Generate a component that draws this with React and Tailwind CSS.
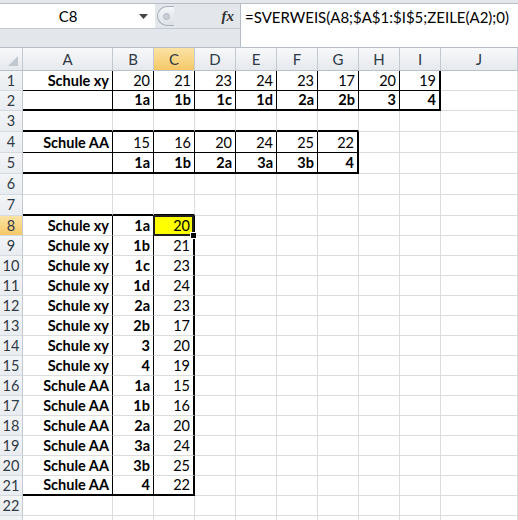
import React from "react";

const COLS = ["A", "B", "C", "D", "E", "F", "G", "H", "I", "J"];
const WIDTHS = [
  "w-[90px]",
  "w-[41px]",
  "w-[41px]",
  "w-[41px]",
  "w-[41px]",
  "w-[41px]",
  "w-[41px]",
  "w-[41px]",
  "w-[41px]",
  "flex-1",
];

// row heights (incl. bottom line)
const ROW_H = {
  1: "h-[20px]",
  2: "h-[20px]",
  3: "h-[21px]",
  4: "h-[21px]",
  5: "h-[21px]",
  6: "h-[21px]",
  7: "h-[21px]",
};

const ROWS = Array.from({ length: 23 }, (_, i) => i + 1);

// cell contents
const cells = {};
const put = (row, startCol, values, bold) => {
  values.forEach((v, i) => {
    cells[`${COLS[startCol + i]}${row}`] = { v, b: bold };
  });
};
put(1, 0, ["Schule xy"], true);
put(1, 1, ["20", "21", "23", "24", "23", "17", "20", "19"], false);
put(2, 1, ["1a", "1b", "1c", "1d", "2a", "2b", "3", "4"], true);
put(4, 0, ["Schule AA"], true);
put(4, 1, ["15", "16", "20", "24", "25", "22"], false);
put(5, 1, ["1a", "1b", "2a", "3a", "3b", "4"], true);

const listB = ["1a", "1b", "1c", "1d", "2a", "2b", "3", "4", "1a", "1b", "2a", "3a", "3b", "4"];
const listC = ["20", "21", "23", "24", "23", "17", "20", "19", "15", "16", "20", "24", "25", "22"];
listB.forEach((b, i) => {
  const r = 8 + i;
  put(r, 0, [i < 8 ? "Schule xy" : "Schule AA"], true);
  put(r, 1, [b], true);
  put(r, 2, [listC[i]], false);
});

const THIN_R = "border-r border-r-black";
const THICK_R = "border-r-2 border-r-black";
const GRID_R = "border-r border-r-[#dadcdd]";
const THIN_B = "border-b border-b-black";
const THICK_B = "border-b-2 border-b-black";
const GRID_B = "border-b border-b-[#dadcdd]";

const rightBorder = (r, c) => {
  if (r <= 2) {
    if (c <= 7) return THIN_R;
    if (c === 8) return THICK_R;
  }
  if (r === 4 || r === 5) {
    if (c <= 5) return THIN_R;
    if (c === 6) return THICK_R;
  }
  if (r >= 8 && r <= 21) {
    if (c <= 1) return THIN_R;
    if (c === 2) return THICK_R;
  }
  return GRID_R;
};

const bottomBorder = (r, c) => {
  if (r === 1 && c <= 8) return THIN_B;
  if (r === 2 && c <= 8) return THICK_B;
  if (r === 3 && c <= 6) return THICK_B;
  if (r === 4 && c <= 6) return THIN_B;
  if (r === 5 && c <= 6) return THICK_B;
  if (r === 7 && c <= 2) return THICK_B;
  if (r === 21 && c <= 2) return THICK_B;
  return GRID_B;
};

const Cell = ({ r, c }) => {
  const key = `${COLS[c]}${r}`;
  const cell = cells[key];
  const active = key === "C8";
  return (
    <div
      className={`${WIDTHS[c]} shrink-0 h-full flex items-end justify-end px-[3px] relative ${rightBorder(r, c)} ${bottomBorder(r, c)} ${
        active ? "bg-[#ffff00]" : "bg-white"
      }`}
    >
      {cell && (
        <span className={`leading-[18px] whitespace-nowrap ${cell.b ? "font-bold" : ""}`}>
          {cell.v}
        </span>
      )}
      {active && (
        <>
          <div className="absolute -left-[1px] -top-[1px] -right-[1px] -bottom-[1px] border-2 border-[#202020] pointer-events-none z-10" />
          <div className="absolute -right-[4px] -bottom-[4px] w-[7px] h-[7px] bg-black border border-white z-20" />
        </>
      )}
    </div>
  );
};

export default function App() {
  return (
    <div
      className="w-[518px] h-[520px] overflow-hidden bg-white text-black text-[14.5px]"
      style={{ fontFamily: "Lato, 'Open Sans', sans-serif" }}
    >
      {/* top strip */}
      <div className="h-[4px] bg-[#e4e8ed] border-b border-[#b6bdc6]" />

      {/* formula bar */}
      <div className="flex h-[44px] border-b border-[#b6bdc6]">
        <div className="w-[241px] shrink-0 flex flex-col bg-[#e3e7ec] border-r border-[#b6bdc6]">
          <div className="h-[25px] flex items-center border-b border-[#c3c9d1]">
            <div className="w-[155px] h-full bg-white flex items-center">
              <span className="w-[136px] text-center leading-[18px] text-[15px]">C8</span>
              <svg width="9" height="5" viewBox="0 0 9 5" className="ml-[3px]">
                <polygon points="0,0 9,0 4.5,5" fill="#444" />
              </svg>
            </div>
            <div className="ml-[2px] w-[17px] h-[20px] rounded-l-full border border-r-0 border-[#a7afb9] bg-linear-to-b from-[#f4f6f8] to-[#dde2e8] flex items-center justify-center">
              <div className="w-[7px] h-[7px] rounded-full bg-[#c9ced5] border border-[#b3b9c1]" />
            </div>
            <div className="flex-1" />
            <span
              className="mr-[6px] italic font-bold text-[15px] leading-none text-[#333]"
              style={{ fontFamily: "'Liberation Serif', serif" }}
            >
              fx
            </span>
          </div>
          <div className="flex-1" />
        </div>
        <div className="flex-1 bg-white pl-[4px] pt-[4px] leading-[18px] text-[15px] whitespace-nowrap">
          =SVERWEIS(A8;$A$1:$I$5;ZEILE(A2);0)
        </div>
      </div>

      {/* column headers */}
      <div className="flex h-[23px] border-b border-[#b9c1cb] text-[#2f3a46] text-[15px]">
        <div className="w-[23px] shrink-0 h-full border-r border-[#c3c9d1] bg-linear-to-b from-[#f7f8fa] to-[#e6e9ed] flex items-end justify-end">
          <svg width="12" height="12" viewBox="0 0 12 12" className="mb-[3px] mr-[3px]">
            <polygon points="11,1 11,11 1,11" fill="#c2c8d0" />
          </svg>
        </div>
        {COLS.map((col, c) => (
          <div
            key={col}
            className={`${WIDTHS[c]} shrink-0 h-full border-r border-[#c3c9d1] flex items-center justify-center leading-[18px] ${
              col === "C"
                ? "bg-linear-to-b from-[#fbe3a4] to-[#f5c866]"
                : "bg-linear-to-b from-[#f7f8fa] to-[#e6e9ed]"
            }`}
          >
            {col}
          </div>
        ))}
      </div>

      {/* rows */}
      {ROWS.map((r) => (
        <div key={r} className={`flex ${ROW_H[r] || "h-[20px]"}`}>
          <div
            className={`w-[23px] shrink-0 h-full border-r border-b border-r-[#c3c9d1] border-b-[#d5dae0] flex items-center justify-center leading-[18px] text-[#2f3a46] ${
              r === 8
                ? "bg-linear-to-b from-[#fbe3a4] to-[#f5c866]"
                : "bg-linear-to-b from-[#f3f5f7] to-[#e9ecf0]"
            }`}
          >
            {r < 23 ? r : ""}
          </div>
          {COLS.map((col, c) => (
            <Cell key={col} r={r} c={c} />
          ))}
        </div>
      ))}
    </div>
  );
}
